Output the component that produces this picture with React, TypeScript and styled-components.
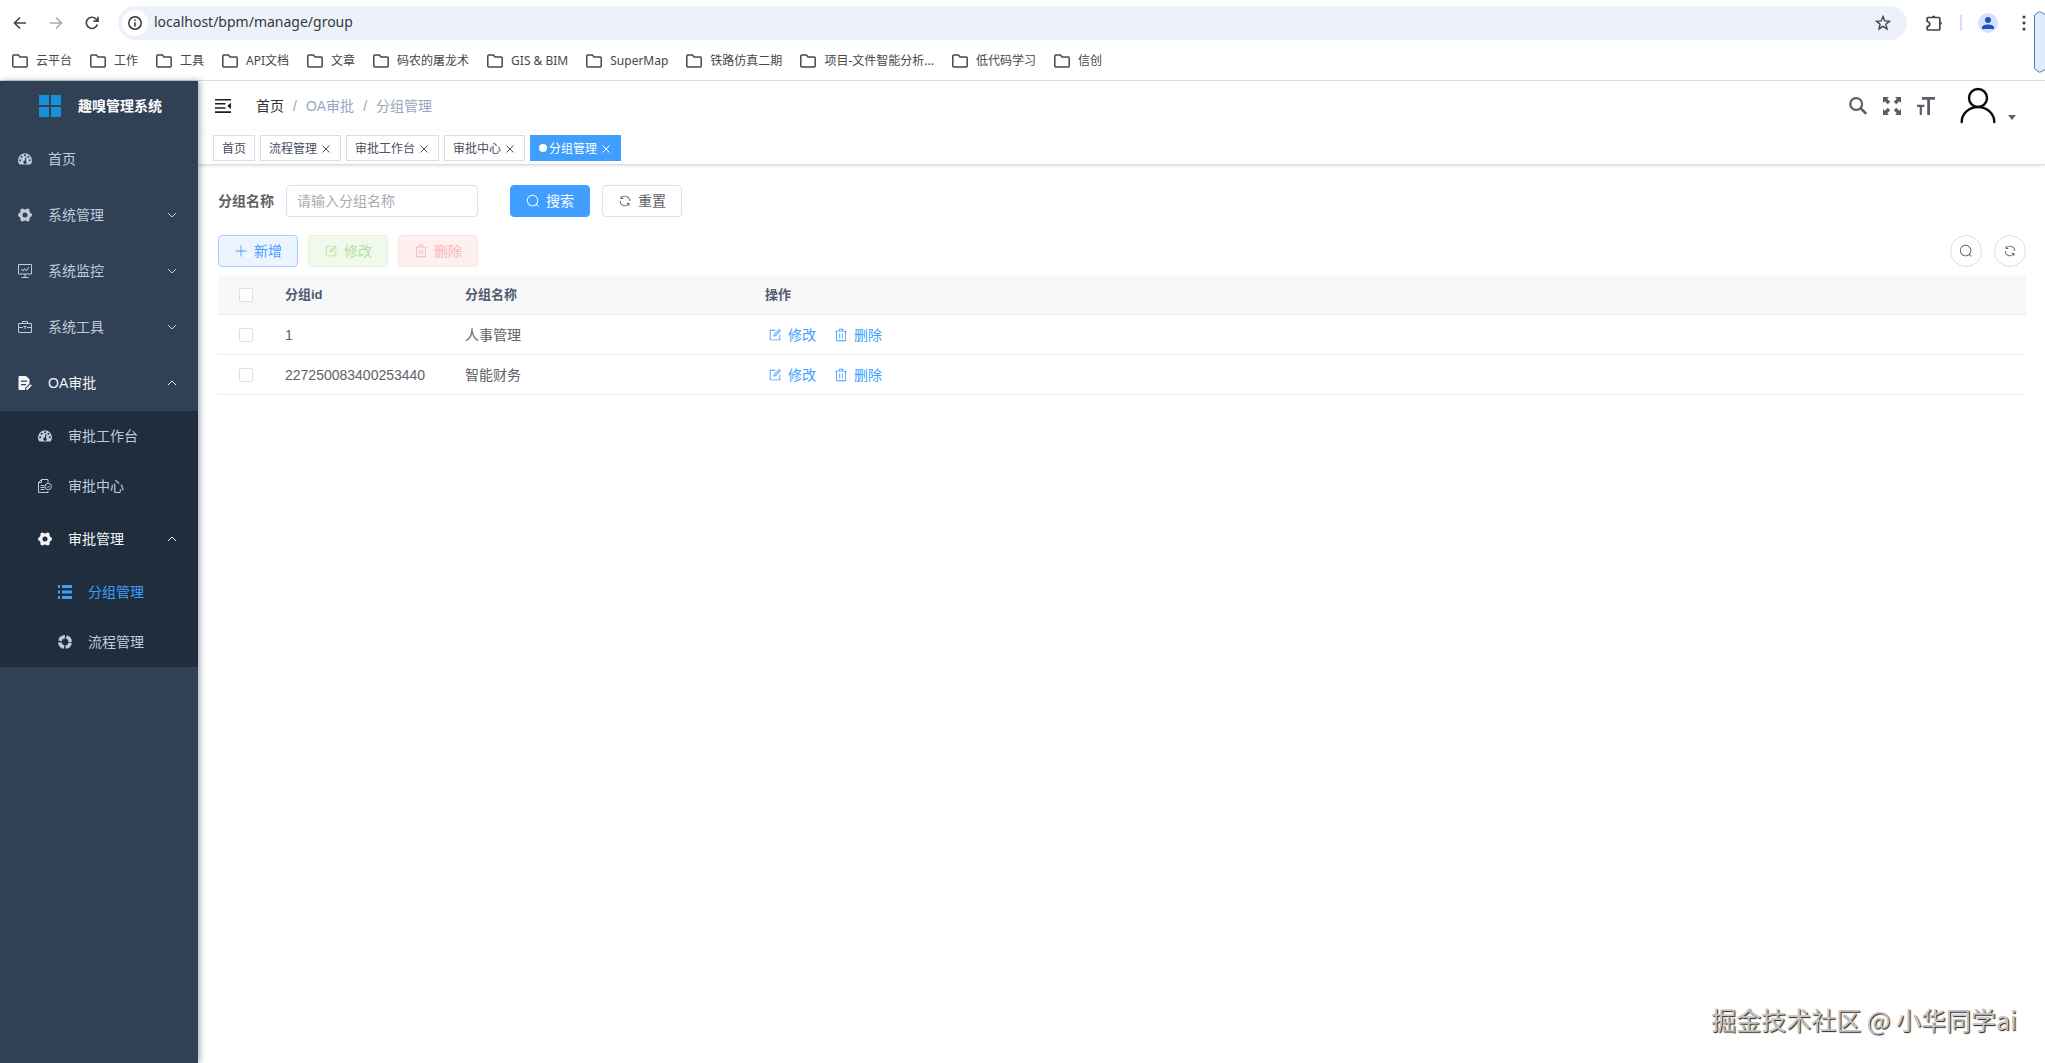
import React from "react";
import styled, { createGlobalStyle, css } from "styled-components";

const GlobalStyle = createGlobalStyle`
  *, *::before, *::after { box-sizing: border-box; }
  body {
    margin: 0;
    background: #fff;
    color: #303133;
    font-family: "Liberation Sans", "Noto Sans CJK SC", sans-serif;
    font-size: 14px;
    line-height: 20px;
  }
  button, input { font-family: inherit; line-height: inherit; margin: 0; }
  button { cursor: pointer; }
  a { color: inherit; text-decoration: none; }
  svg { display: block; flex: none; }
`;

/* ---------- icons ---------- */

type IconProps = { size?: number };

const shapes = {
  search: [
    "m795.904 750.72 124.992 124.928a32 32 0 0 1-45.248 45.248L750.656 795.904a416 416 0 1 1 45.248-45.248zM480 832a352 352 0 1 0 0-704 352 352 0 0 0 0 704z",
  ],
  refresh: [
    "M771.776 794.88A384 384 0 0 1 128 512h64a320 320 0 0 0 555.712 216.448H654.72a32 32 0 1 1 0-64h149.056a32 32 0 0 1 32 32v148.928a32 32 0 1 1-64 0v-50.56zM276.288 295.616h92.992a32 32 0 0 1 0 64H220.16a32 32 0 0 1-32-32V178.56a32 32 0 0 1 64 0v50.56A384 384 0 0 1 896.128 512h-64a320 320 0 0 0-555.776-216.384z",
  ],
  plus: [
    "M480 480V128a32 32 0 0 1 64 0v352h352a32 32 0 1 1 0 64H544v352a32 32 0 1 1-64 0V544H128a32 32 0 0 1 0-64h352z",
  ],
  edit: [
    "M832 512a32 32 0 1 1 64 0v352a32 32 0 0 1-32 32H160a32 32 0 0 1-32-32V160a32 32 0 0 1 32-32h352a32 32 0 0 1 0 64H192v640h640V512z",
    "m469.952 554.24 52.8-7.552L847.104 222.4a32 32 0 1 0-45.248-45.248L477.44 501.44l-7.552 52.8zm422.4-422.4a96 96 0 0 1 0 135.808l-331.84 331.84a32 32 0 0 1-18.112 9.088L436.8 623.68a32 32 0 0 1-36.224-36.224l15.104-105.6a32 32 0 0 1 9.024-18.112l331.904-331.84a96 96 0 0 1 135.744 0z",
  ],
  remove: [
    "M160 256H96a32 32 0 0 1 0-64h256V95.936a32 32 0 0 1 32-32h256a32 32 0 0 1 32 32V192h256a32 32 0 1 1 0 64h-64v672a32 32 0 0 1-32 32H192a32 32 0 0 1-32-32V256zm448-64v-64H416v64h192zM224 896h576V256H224v640zm192-128a32 32 0 0 1-32-32V416a32 32 0 0 1 64 0v320a32 32 0 0 1-32 32zm192 0a32 32 0 0 1-32-32V416a32 32 0 0 1 64 0v320a32 32 0 0 1-32 32z",
  ],
};

const ElIcon = ({ name, size = 14 }: IconProps & { name: keyof typeof shapes }) => (
  <svg width={size} height={size} viewBox="0 0 1024 1024" fill="currentColor" aria-hidden="true">
    {shapes[name].map((d) => (
      <path key={d} d={d} />
    ))}
  </svg>
);

const Chevron = ({ up }: { up?: boolean }) => (
  <svg width="12" height="12" viewBox="0 0 12 12" fill="none" stroke="currentColor" aria-hidden="true">
    <path d={up ? "M2 8l4-4 4 4" : "M2 4l4 4 4-4"} />
  </svg>
);

const DashboardIcon = () => (
  <svg width="14" height="14" viewBox="0 0 14 14" aria-hidden="true">
    <path
      fill="currentColor"
      fillRule="evenodd"
      d="M1.500 12.600A7 7 0 1 1 12.500 12.600H1.500zM7 2.200a1 1 0 1 0 0 2 1 1 0 0 0 0-2zM3.600 3.700a1 1 0 1 0 0 2 1 1 0 0 0 0-2zM2.200 7.200a1 1 0 1 0 0 2 1 1 0 0 0 0-2zM11.800 7.200a1 1 0 1 0 0 2 1 1 0 0 0 0-2zM10.400 3.700a1 1 0 1 0 0 2 1 1 0 0 0 0-2zM7.500 5.100L6.700 8.600a1.600 1.600 0 1 0 1.200.3l.6-3.500z"
    />
  </svg>
);

const GearIcon = () => (
  <svg width="14" height="14" viewBox="0 0 14 14" fill="currentColor" aria-hidden="true">
    <circle cx="7" cy="7" r="4.100" fill="none" stroke="currentColor" strokeWidth="3.200" />
    <circle cx="1.900" cy="7" r="1.900" />
    <circle cx="12.100" cy="7" r="1.900" />
    <circle cx="4.300" cy="2.500" r="1.900" />
    <circle cx="9.700" cy="2.500" r="1.900" />
    <circle cx="4.300" cy="11.500" r="1.900" />
    <circle cx="9.700" cy="11.500" r="1.900" />
  </svg>
);

const MonitorIcon = () => (
  <svg width="14" height="14" viewBox="0 0 14 14" fill="none" stroke="currentColor" aria-hidden="true">
    <path d="M.5.5h13v9.500H.5zM7 10v3.500M3.500 13.500h7M3 5.200l2 1.800 1.600-2.500L8.400 7l2.400-4" />
  </svg>
);

const ToolIcon = () => (
  <svg width="14" height="14" viewBox="0 0 14 14" fill="none" stroke="currentColor" aria-hidden="true">
    <path d="M.5 3.500h13v9H.5zM4.500 3.500v-2h5v2M.5 7.500H5M9 7.500h4.500M5.500 6.500h3M7 6.500v2.500" />
  </svg>
);

const FormIcon = () => (
  <svg width="14" height="14" viewBox="0 0 14 14" aria-hidden="true">
    <path
      fill="currentColor"
      fillRule="evenodd"
      d="M1.500 0H8l3.500 3.300v4.300L7.200 12l-.2 2H1.500A1 1 0 0 1 .5 13V1a1 1 0 0 1 1-1zM3 4.500v1.200h6V4.500zM3 8v1.200h5V8zM12.500 8.300l1.400 1.300L9.700 13.700l-1.700.3.300-1.700z"
    />
  </svg>
);

const AuditIcon = () => (
  <svg width="14" height="14" viewBox="0 0 14 14" fill="none" stroke="currentColor" aria-hidden="true">
    <path d="M10 3.500V.5H3.500L.5 3.500v10h9.500v-1.500M3.500.5v3H.5M2.500 6.500h4M2.500 8.500h4M2.500 10.500h4" />
    <circle cx="10.200" cy="7.500" r="3.200" />
    <path d="M9 7.500l1 1 1.600-1.700" />
  </svg>
);

const ListIcon = () => (
  <svg width="14" height="14" viewBox="0 0 14 14" fill="currentColor" aria-hidden="true">
    <path d="M0 0h2v3H0zM4 0h10v3H4zM0 5.500h2v3H0zM4 5.500h10v3H4zM0 11h2v3H0zM4 11h10v3H4z" />
  </svg>
);

const RingIcon = () => (
  <svg width="14" height="14" viewBox="0 0 14 14" fill="none" stroke="currentColor" strokeWidth="3.400" aria-hidden="true">
    <circle cx="7" cy="7" r="5.200" strokeDasharray="6.670 1.500" strokeDashoffset="-0.750" />
  </svg>
);

const LogoIcon = () => (
  <svg width="24" height="24" viewBox="0 0 24 24" fill="#1890d8" aria-hidden="true">
    <path d="M1 1h10v10H1zM13 1h10v10H13zM1 13h10v10H1zM13 13h10v10H13z" />
  </svg>
);

const FoldIcon = () => (
  <svg width="20" height="20" viewBox="0 0 20 20" fill="#1f1f1f" aria-hidden="true">
    <path d="M2 3h16v1.600H2zM2 7h10.500v1.600H2zM2 11.200h10.500v1.600H2zM2 15.300h16v1.600H2zM18 6.700v6.400L14.200 9.900z" />
  </svg>
);

const FolderIcon = () => (
  <svg width="16" height="14" viewBox="0 0 16 14" fill="none" stroke="#474747" strokeWidth="1.500" aria-hidden="true">
    <path d="M.8 2v10q0 1 1 1h12.400q1 0 1-1V4q0-1-1-1H8L6.400 1H1.800q-1 0-1 1z" />
  </svg>
);

/* ---------- browser chrome ---------- */

const Screen = styled.div`
  min-height: 100vh;
  display: flex;
  flex-direction: column;
  position: relative;
`;

const Browser = styled.header`
  position: relative;
  flex: none;
  border-bottom: 1px solid #d9dadd;
  font-family: "Noto Sans", "Noto Sans CJK SC", sans-serif;
`;

const AddressRow = styled.div`
  display: flex;
  align-items: center;
  height: 46px;
  padding: 0 3px 0 10px;
`;

const ChromeButton = styled.button<{ $faded?: boolean; $width?: number }>`
  flex: none;
  display: grid;
  place-items: center;
  width: ${(p) => p.$width ?? 36}px;
  height: 34px;
  padding: 0;
  border: 0;
  background: none;
  color: ${(p) => (p.$faded ? "#a9a9a9" : "#444")};
`;

const AddressBar = styled.div`
  flex: 1;
  display: flex;
  align-items: center;
  height: 34px;
  margin: 0 9px 0 16px;
  padding: 0 6px 0 4px;
  border-radius: 17px;
  background: #ecf1fa;
`;

const InfoBadge = styled.span`
  display: grid;
  place-items: center;
  width: 26px;
  height: 26px;
  border-radius: 50%;
  background: #fff;
`;

const AddressInput = styled.input`
  flex: 1;
  min-width: 0;
  padding: 0 6px 2px;
  border: 0;
  outline: 0;
  background: none;
  color: #36383b;
  font-size: 14px;
`;

const ChromeDivider = styled.span`
  width: 2px;
  height: 16px;
  margin: 0 8px;
  background: #d3e0f6;
`;

const Profile = styled.span`
  display: grid;
  place-items: center;
  width: 20px;
  height: 20px;
  border-radius: 50%;
  background: #d3e3fd;
`;

const Bookmarks = styled.nav`
  display: flex;
  align-items: center;
  gap: 18px;
  height: 34px;
  padding: 0 12px 4px;
`;

const Bookmark = styled.a`
  display: flex;
  align-items: center;
  gap: 8px;
  color: #474747;
  font-size: 12px;
  white-space: nowrap;
`;

const EdgeHandle = styled.svg`
  position: absolute;
  top: 11px;
  right: 0;
`;

/* ---------- side bar ---------- */

const Shell = styled.div`
  flex: 1;
  display: flex;
`;

const Sidebar = styled.aside`
  position: relative;
  z-index: 1;
  flex: none;
  width: 198px;
  background: #304156;
  color: #bfcbd9;
  box-shadow: 2px 0 6px rgba(0, 21, 41, 0.35);
`;

const Brand = styled.a`
  display: flex;
  align-items: center;
  gap: 16px;
  height: 50px;
  padding-left: 38px;
  color: #fff;
  font-size: 14px;
  font-weight: 700;
`;

const itemStyle = css<{ $level: number; $state?: "open" | "active" }>`
  display: flex;
  align-items: center;
  gap: 16px;
  width: 100%;
  padding: 0 20px 0 ${(p) => 18 + p.$level * 20}px;
  border: 0;
  background: none;
  color: ${(p) => (p.$state === "open" ? "#f4f4f5" : p.$state === "active" ? "#409eff" : "#bfcbd9")};
  font-size: 14px;
  text-align: left;
`;

const MenuLink = styled.a<{ $level: number; $state?: "open" | "active" }>`
  ${itemStyle}
  height: ${(p) => (p.$level === 0 ? 56 : 50)}px;
`;

const MenuToggle = styled.button<{ $level: number; $state?: "open" | "active" }>`
  ${itemStyle}
  height: 56px;
`;

const MenuText = styled.span`
  flex: 1;
`;

const SubMenu = styled.div`
  background: #1f2d3d;
`;

/* ---------- main column ---------- */

const Main = styled.div`
  flex: 1;
  min-width: 0;
`;

const Navbar = styled.div`
  display: flex;
  align-items: center;
  height: 50px;
  padding: 0 29px 0 15px;
  box-shadow: 0 1px 4px rgba(0, 21, 41, 0.08);
`;

const IconButton = styled.button`
  display: grid;
  place-items: center;
  padding: 0;
  border: 0;
  background: none;
  color: #5a5e66;
`;

const Breadcrumb = styled.nav`
  flex: 1;
  display: flex;
  gap: 9px;
  margin-left: 23px;
  color: #97a8be;
`;

const Crumb = styled.a<{ $strong?: boolean }>`
  color: ${(p) => (p.$strong ? "#303133" : "#97a8be")};
`;

const NavTools = styled.div`
  display: flex;
  align-items: center;
  gap: 16px;
`;

const UserMenu = styled.button`
  display: flex;
  align-items: flex-end;
  gap: 10px;
  height: 40px;
  margin-left: 7px;
  padding: 0;
  border: 0;
  background: none;
`;

const Caret = styled.span`
  margin-bottom: 6px;
  border: 4px solid transparent;
  border-top: 5px solid #5a5e66;
  border-bottom: 0;
`;

const Tags = styled.div`
  display: flex;
  align-items: center;
  gap: 5px;
  height: 34px;
  padding: 0 15px;
  background: #fff;
  border-bottom: 1px solid #d8dce5;
  box-shadow: 0 1px 3px rgba(0, 0, 0, 0.12);
`;

const Tag = styled.span<{ $active?: boolean }>`
  display: flex;
  align-items: center;
  height: 26px;
  padding: 0 8px;
  border: 1px solid ${(p) => (p.$active ? "#409eff" : "#d8dce5")};
  background: ${(p) => (p.$active ? "#409eff" : "#fff")};
  color: ${(p) => (p.$active ? "#fff" : "#495060")};
  font-size: 12px;
  line-height: normal;
  &::before {
    content: "";
    display: ${(p) => (p.$active ? "block" : "none")};
    width: 8px;
    height: 8px;
    margin-right: 2px;
    border-radius: 50%;
    background: #fff;
  }
`;

const TagClose = styled.button`
  display: grid;
  place-items: center;
  width: 12px;
  height: 12px;
  margin: 2px 0 0 3px;
  padding: 0;
  border: 0;
  background: none;
  color: inherit;
`;

const Content = styled.main`
  padding: 20px 19px 20px 20px;
`;

const SearchForm = styled.form`
  display: flex;
  align-items: center;
  height: 32px;
  margin-bottom: 18px;
`;

const FieldLabel = styled.label`
  margin-right: 12px;
  color: #606266;
  font-weight: 700;
`;

const TextInput = styled.input`
  width: 192px;
  height: 32px;
  margin-right: 32px;
  padding: 0 10px;
  border: 1px solid #dcdfe6;
  border-radius: 4px;
  outline: 0;
  color: #606266;
  font-size: 14px;
  &::placeholder { color: #a8abb2; opacity: 1; }
`;

const tones = {
  primary: ["#409eff", "#409eff", "#fff"],
  plain: ["#fff", "#dcdfe6", "#606266"],
  add: ["#ecf5ff", "#a0cfff", "#409eff"],
  edit: ["#f0f9eb", "#e1f3d8", "#b3e19d"],
  remove: ["#fef0f0", "#fde2e2", "#fab6b6"],
};

const Button = styled.button<{ $tone: keyof typeof tones }>`
  display: flex;
  align-items: center;
  justify-content: center;
  gap: 6px;
  height: 32px;
  padding: 0 15px;
  border: 1px solid ${(p) => tones[p.$tone][1]};
  border-radius: 4px;
  background: ${(p) => tones[p.$tone][0]};
  color: ${(p) => tones[p.$tone][2]};
  font-size: 14px;
  & + & { margin-left: 12px; }
`;

const Toolbar = styled.div`
  display: flex;
  gap: 10px;
  margin-bottom: 9px;
  ${Button} + ${Button} { margin-left: 0; }
`;

const RoundGroup = styled.div`
  display: flex;
  gap: 12px;
  margin-left: auto;
`;

const RoundButton = styled.button`
  display: grid;
  place-items: center;
  width: 32px;
  height: 32px;
  padding: 0;
  border: 1px solid #dcdfe6;
  border-radius: 50%;
  background: #fff;
  color: #606266;
`;

const Table = styled.table`
  width: 100%;
  table-layout: fixed;
  border-collapse: separate;
  border-spacing: 0;
  text-align: left;
`;

const Col = styled.col<{ $width?: number }>`
  width: ${(p) => (p.$width ? `${p.$width}px` : "auto")};
`;

const HeadCell = styled.th`
  height: 39px;
  padding: 0 12px;
  border-bottom: 1px solid #ebeef5;
  background: #f8f8f9;
  color: #515a6e;
  font-size: 13px;
`;

const Cell = styled.td`
  height: 40px;
  padding: 0 12px;
  border-bottom: 1px solid #ebeef5;
  color: #606266;
`;

const Check = styled.input`
  appearance: none;
  display: block;
  width: 14px;
  height: 14px;
  margin: 0 auto;
  border: 1px solid #dcdfe6;
  border-radius: 2px;
  background: #fff;
`;

const RowActions = styled.div`
  display: flex;
  gap: 12px;
`;

const LinkButton = styled.button`
  display: flex;
  align-items: center;
  gap: 6px;
  padding: 2px 3px;
  border: 0;
  background: none;
  color: #409eff;
  font-size: 14px;
`;

const Watermark = styled.p`
  position: absolute;
  right: 28px;
  bottom: 25px;
  margin: 0;
  color: #c4c4c4;
  font-family: "Noto Sans CJK SC", sans-serif;
  font-size: 25px;
  line-height: 38px;
  text-shadow: 1px 1px 1px #222;
  pointer-events: none;
`;

const bookmarks = [
  "云平台", "工作", "工具", "API文档", "文章", "码农的屠龙术", "GIS & BIM",
  "SuperMap", "铁路仿真二期", "项目-文件智能分析...", "低代码学习", "信创",
];

const tags = ["首页", "流程管理", "审批工作台", "审批中心", "分组管理"];

const groups = [
  { id: "1", name: "人事管理" },
  { id: "227250083400253440", name: "智能财务" },
];

function BrowserChrome() {
  return (
    <Browser>
      <AddressRow>
        <ChromeButton $width={20} aria-label="Back">
          <svg width="14" height="14" viewBox="0 0 14 14" fill="none" stroke="currentColor" strokeWidth="1.600">
            <path d="M13 7H1.500M7 1.500L1.500 7 7 12.500" />
          </svg>
        </ChromeButton>
        <ChromeButton $width={52} $faded aria-label="Forward">
          <svg width="14" height="14" viewBox="0 0 14 14" fill="none" stroke="currentColor" strokeWidth="1.600">
            <path d="M1 7h11.500M7 1.500L12.500 7 7 12.500" />
          </svg>
        </ChromeButton>
        <ChromeButton $width={20} aria-label="Reload">
          <svg width="14" height="14" viewBox="0 0 14 14" fill="none" stroke="currentColor" strokeWidth="1.700">
            <path d="M12.300 8.500A5.600 5.600 0 1 1 11 3L12.800 5M13 .8V5.200H8.500" />
          </svg>
        </ChromeButton>
        <AddressBar>
          <InfoBadge>
            <svg width="14" height="14" viewBox="0 0 14 14" fill="none" stroke="#333" strokeWidth="1.500">
              <circle cx="7" cy="7" r="6.200" />
              <path d="M7 6.200v4.300M7 3.400v1.500" />
            </svg>
          </InfoBadge>
          <AddressInput aria-label="Address" defaultValue="localhost/bpm/manage/group" />
          <ChromeButton aria-label="Bookmark this page">
            <svg width="16" height="16" viewBox="0 0 16 16" fill="none" stroke="currentColor" strokeWidth="1.400">
              <path d="M8 1.600l1.800 4.300 4.700.4-3.600 3 1.100 4.600L8 11.400l-4 2.500 1.100-4.600-3.600-3 4.700-.4z" />
            </svg>
          </ChromeButton>
        </AddressBar>
        <ChromeButton aria-label="Extensions">
          <svg width="18" height="18" viewBox="0 0 18 18" fill="none" stroke="currentColor" strokeWidth="1.700">
            <path d="M3 3.500h11a.8.8 0 0 1 .8.8v10.900a.8.800 0 0 1-.8.8H3a.8.800 0 0 1-.8-.8V12.500a2.300 2.300 0 0 0 0-5V4.300a.8.800 0 0 1 .8-.8z" />
            <path d="M7 3a1.600 1.600 0 0 1 3.200 0zM15.300 7.500a1.600 1.600 0 0 1 0 3.200z" fill="currentColor" stroke="none" />
          </svg>
        </ChromeButton>
        <ChromeDivider />
        <ChromeButton aria-label="Profile">
          <Profile>
            <svg width="14" height="14" viewBox="0 0 14 14" fill="#1f51c0">
              <circle cx="7" cy="4" r="3" />
              <path d="M1 13v-1.500C1 9.500 4 8.500 7 8.500s6 1 6 3V13z" />
            </svg>
          </Profile>
        </ChromeButton>
        <ChromeButton aria-label="Browser menu">
          <svg width="4" height="16" viewBox="0 0 4 16" fill="currentColor">
            <circle cx="2" cy="2" r="1.600" />
            <circle cx="2" cy="8" r="1.600" />
            <circle cx="2" cy="14" r="1.600" />
          </svg>
        </ChromeButton>
      </AddressRow>
      <Bookmarks aria-label="Bookmarks">
        {bookmarks.map((name) => (
          <Bookmark key={name} href="#">
            <FolderIcon />
            {name}
          </Bookmark>
        ))}
      </Bookmarks>
      <EdgeHandle width="11" height="62" viewBox="0 0 11 62" fill="#e1ebfd" stroke="#3f80c4" aria-hidden="true">
        <path d="M.5 4L4 1.500Q5.500 0 7.500 1.500L14 5v52l-6.500 3.500Q5.500 62 4 60.500L.5 57.500z" />
      </EdgeHandle>
    </Browser>
  );
}

function SideMenu() {
  return (
    <Sidebar>
      <Brand href="#">
        <LogoIcon />
        趣嗅管理系统
      </Brand>
      <nav>
        <MenuLink $level={0} href="#"><DashboardIcon /><MenuText>首页</MenuText></MenuLink>
        <MenuToggle $level={0}><GearIcon /><MenuText>系统管理</MenuText><Chevron /></MenuToggle>
        <MenuToggle $level={0}><MonitorIcon /><MenuText>系统监控</MenuText><Chevron /></MenuToggle>
        <MenuToggle $level={0}><ToolIcon /><MenuText>系统工具</MenuText><Chevron /></MenuToggle>
        <MenuToggle $level={0} $state="open"><FormIcon /><MenuText>OA审批</MenuText><Chevron up /></MenuToggle>
        <SubMenu>
          <MenuLink $level={1} href="#"><DashboardIcon /><MenuText>审批工作台</MenuText></MenuLink>
          <MenuLink $level={1} href="#"><AuditIcon /><MenuText>审批中心</MenuText></MenuLink>
          <MenuToggle $level={1} $state="open"><GearIcon /><MenuText>审批管理</MenuText><Chevron up /></MenuToggle>
          <MenuLink $level={2} $state="active" href="#"><ListIcon /><MenuText>分组管理</MenuText></MenuLink>
          <MenuLink $level={2} href="#"><RingIcon /><MenuText>流程管理</MenuText></MenuLink>
        </SubMenu>
      </nav>
    </Sidebar>
  );
}

function TopBar() {
  return (
    <Navbar>
      <IconButton aria-label="收起菜单"><FoldIcon /></IconButton>
      <Breadcrumb>
        <Crumb href="#" $strong>首页</Crumb>
        <span>/</span>
        <Crumb as="span">OA审批</Crumb>
        <span>/</span>
        <Crumb as="span">分组管理</Crumb>
      </Breadcrumb>
      <NavTools>
        <IconButton aria-label="搜索">
          <svg width="18" height="18" viewBox="0 0 18 18" fill="none" stroke="currentColor" strokeWidth="2.200">
            <circle cx="7.200" cy="7" r="5.900" />
            <path d="M11.500 11.200l5.700 5.700" strokeWidth="2.600" />
          </svg>
        </IconButton>
        <IconButton aria-label="全屏">
          <svg width="18" height="18" viewBox="0 0 18 18" fill="currentColor">
            <path d="M0 0h6L4.200 1.800 7.200 4.800 4.800 7.200 1.800 4.200 0 6zM18 0v6l-1.800-1.800-3 3-2.400-2.400 3-3L12 0zM0 18v-6l1.800 1.800 3-3 2.400 2.400-3 3L6 18zM18 18h-6l1.800-1.800-3-3 2.400-2.400 3 3L18 12z" />
          </svg>
        </IconButton>
        <IconButton aria-label="字体大小">
          <svg width="18" height="18" viewBox="0 0 18 18" fill="none" stroke="currentColor">
            <path d="M5 1.300h13M11.600 1v17" strokeWidth="2.800" />
            <path d="M0 8.800h7.500M3.800 8.500V18" strokeWidth="2.200" />
          </svg>
        </IconButton>
        <UserMenu aria-label="用户菜单">
          <svg width="40" height="40" viewBox="0 0 40 40" fill="none" stroke="#0a0a0a" strokeWidth="2.400">
            <circle cx="20" cy="12" r="9" />
            <path d="M3.700 36a16.300 15 0 0 1 32.600 0" strokeLinecap="round" />
          </svg>
          <Caret />
        </UserMenu>
      </NavTools>
    </Navbar>
  );
}

export default function App() {
  return (
    <Screen>
      <GlobalStyle />
      <BrowserChrome />
      <Shell>
        <SideMenu />
        <Main>
          <TopBar />
          <Tags>
            {tags.map((tag, i) => (
              <Tag key={tag} $active={i === tags.length - 1}>
                <a href="#">{tag}</a>
                {i > 0 && (
                  <TagClose aria-label={`关闭${tag}`}>
                    <svg width="8" height="8" viewBox="0 0 8 8" fill="none" stroke="currentColor">
                      <path d="M.5.5l7 7M7.500.5l-7 7" />
                    </svg>
                  </TagClose>
                )}
              </Tag>
            ))}
          </Tags>
          <Content>
            <SearchForm onSubmit={(e) => e.preventDefault()}>
              <FieldLabel htmlFor="group-name">分组名称</FieldLabel>
              <TextInput id="group-name" placeholder="请输入分组名称" />
              <Button $tone="primary" type="submit"><ElIcon name="search" />搜索</Button>
              <Button $tone="plain" type="reset"><ElIcon name="refresh" />重置</Button>
            </SearchForm>
            <Toolbar>
              <Button $tone="add"><ElIcon name="plus" />新增</Button>
              <Button $tone="edit" disabled><ElIcon name="edit" />修改</Button>
              <Button $tone="remove" disabled><ElIcon name="remove" />删除</Button>
              <RoundGroup>
                <RoundButton aria-label="隐藏搜索"><ElIcon name="search" /></RoundButton>
                <RoundButton aria-label="刷新"><ElIcon name="refresh" /></RoundButton>
              </RoundGroup>
            </Toolbar>
            <Table>
              <colgroup>
                <Col $width={55} />
                <Col $width={180} />
                <Col $width={300} />
                <Col />
              </colgroup>
              <thead>
                <tr>
                  <HeadCell><Check type="checkbox" aria-label="全选" /></HeadCell>
                  <HeadCell>分组id</HeadCell>
                  <HeadCell>分组名称</HeadCell>
                  <HeadCell>操作</HeadCell>
                </tr>
              </thead>
              <tbody>
                {groups.map((group) => (
                  <tr key={group.id}>
                    <Cell><Check type="checkbox" aria-label={`选择${group.name}`} /></Cell>
                    <Cell>{group.id}</Cell>
                    <Cell>{group.name}</Cell>
                    <Cell>
                      <RowActions>
                        <LinkButton><ElIcon name="edit" />修改</LinkButton>
                        <LinkButton><ElIcon name="remove" />删除</LinkButton>
                      </RowActions>
                    </Cell>
                  </tr>
                ))}
              </tbody>
            </Table>
          </Content>
        </Main>
      </Shell>
      <Watermark>掘金技术社区 @ 小华同学ai</Watermark>
    </Screen>
  );
}
